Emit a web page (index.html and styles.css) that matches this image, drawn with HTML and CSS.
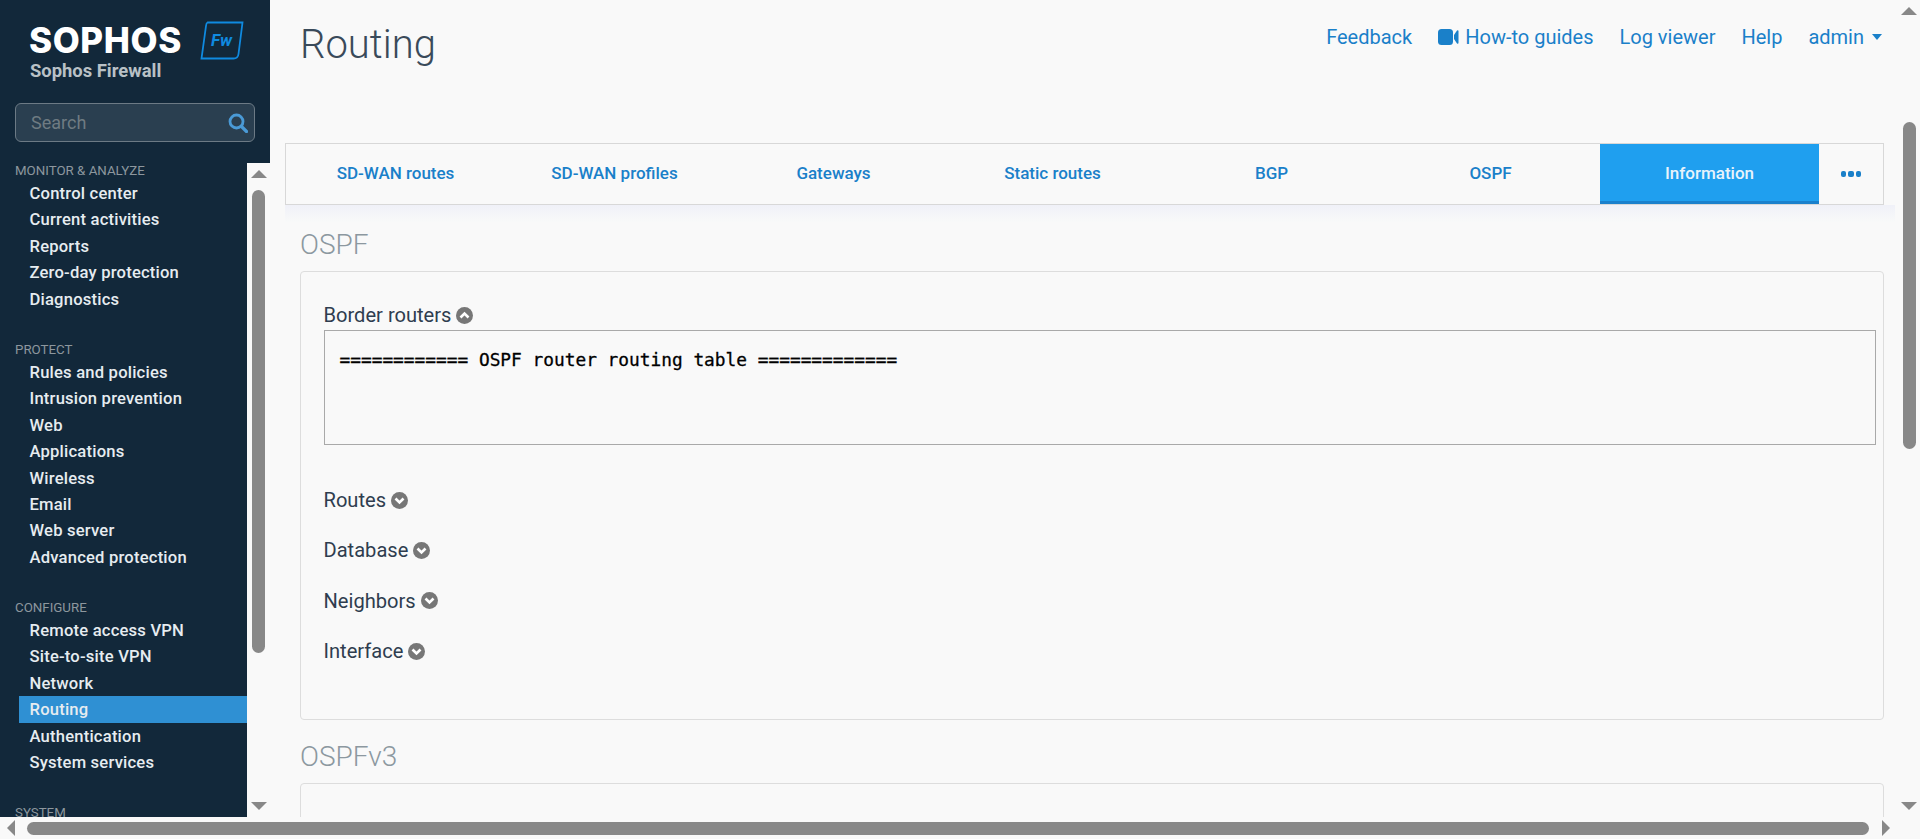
FILE: index.html
```html
<!DOCTYPE html>
<html lang="en">
<head>
<meta charset="utf-8">
<title>Routing</title>
<link rel="stylesheet" href="styles.css">
</head>
<body>
<div class="app">
  <aside class="sidebar">
    <div class="brand">
      <div class="brand-top">
        <span class="wordmark">SOPHOS</span>
        <svg class="fw-badge" width="44" height="40" viewBox="0 0 44 40">
          <path d="M7.500 1.500H42.500L38.500 33Q38 37.500 33.500 37.500H1.500L6 5Q6.300 2 7.500 1.500Z" fill="none" stroke="#0f8ae0" stroke-width="1.800"/>
          <text x="11" y="25" class="fw-text">Fw</text>
        </svg>
      </div>
      <div class="product">Sophos Firewall</div>
      <div class="search">
        <span class="search-text">Search</span>
        <svg width="20" height="20" viewBox="0 0 20 20"><circle cx="8.500" cy="8.500" r="6.500" fill="none" stroke="#4a9ad6" stroke-width="2.800"/><path d="M13.500 13.500L18.500 18.500" stroke="#4a9ad6" stroke-width="3.200" stroke-linecap="round"/></svg>
      </div>
    </div>
    <div class="side-body">
      <nav class="side-nav">
        <div class="nav-group">
          <div class="nav-head">MONITOR &amp; ANALYZE</div>
          <a class="nav-item">Control center</a>
          <a class="nav-item">Current activities</a>
          <a class="nav-item">Reports</a>
          <a class="nav-item">Zero-day protection</a>
          <a class="nav-item">Diagnostics</a>
        </div>
        <div class="nav-group">
          <div class="nav-head">PROTECT</div>
          <a class="nav-item">Rules and policies</a>
          <a class="nav-item">Intrusion prevention</a>
          <a class="nav-item">Web</a>
          <a class="nav-item">Applications</a>
          <a class="nav-item">Wireless</a>
          <a class="nav-item">Email</a>
          <a class="nav-item">Web server</a>
          <a class="nav-item">Advanced protection</a>
        </div>
        <div class="nav-group">
          <div class="nav-head">CONFIGURE</div>
          <a class="nav-item">Remote access VPN</a>
          <a class="nav-item">Site-to-site VPN</a>
          <a class="nav-item">Network</a>
          <a class="nav-item is-active">Routing</a>
          <a class="nav-item">Authentication</a>
          <a class="nav-item">System services</a>
        </div>
        <div class="nav-group">
          <div class="nav-head">SYSTEM</div>
        </div>
      </nav>
      <div class="vscroll vscroll-side">
        <span class="arrow arrow-up"></span>
        <span class="thumb-v thumb-side"></span>
        <span class="arrow arrow-down"></span>
      </div>
    </div>
  </aside>

  <main class="main">
    <header class="topbar">
      <h1 class="title">Routing</h1>
      <div class="links">
        <a class="link">Feedback</a>
        <a class="link link-video">
          <svg width="21" height="16" viewBox="0 0 21 16"><rect x="0" y="0" width="15" height="16" rx="3.500" fill="#1a80c9"/><path d="M16 6L19 1.500Q20.500 .5 20.500 2.500V13.500Q20.500 15.500 19 14.500L16 10Z" fill="#1a80c9"/></svg>
          How-to guides
        </a>
        <a class="link">Log viewer</a>
        <a class="link">Help</a>
        <a class="link link-admin">admin <span class="caret"></span></a>
      </div>
    </header>

    <div class="tabs">
      <a class="tab">SD-WAN routes</a>
      <a class="tab">SD-WAN profiles</a>
      <a class="tab">Gateways</a>
      <a class="tab">Static routes</a>
      <a class="tab">BGP</a>
      <a class="tab">OSPF</a>
      <a class="tab is-active">Information</a>
      <a class="tab-more"><span class="dot"></span><span class="dot"></span><span class="dot"></span></a>
    </div>
    <div class="tabs-glow"></div>

    <section class="section">
      <h2 class="section-title">OSPF</h2>
      <div class="card card-ospf">
        <div class="label-row">Border routers
          <svg class="chev" width="17" height="17" viewBox="0 0 17 17"><circle cx="8.500" cy="8.500" r="8.500" fill="#777"/><path d="M4.500 10.500L8.500 6.500L12.500 10.500" fill="none" stroke="#fff" stroke-width="2.600"/></svg>
        </div>
        <div class="output">============ OSPF router routing table =============</div>
        <div class="rows">
          <div class="label-row tall">Routes
            <svg class="chev" width="17" height="17" viewBox="0 0 17 17"><circle cx="8.500" cy="8.500" r="8.500" fill="#777"/><path d="M4.500 6.500L8.500 10.500L12.500 6.500" fill="none" stroke="#fff" stroke-width="2.600"/></svg>
          </div>
          <div class="label-row tall">Database
            <svg class="chev" width="17" height="17" viewBox="0 0 17 17"><circle cx="8.500" cy="8.500" r="8.500" fill="#777"/><path d="M4.500 6.500L8.500 10.500L12.500 6.500" fill="none" stroke="#fff" stroke-width="2.600"/></svg>
          </div>
          <div class="label-row tall">Neighbors
            <svg class="chev" width="17" height="17" viewBox="0 0 17 17"><circle cx="8.500" cy="8.500" r="8.500" fill="#777"/><path d="M4.500 6.500L8.500 10.500L12.500 6.500" fill="none" stroke="#fff" stroke-width="2.600"/></svg>
          </div>
          <div class="label-row tall">Interface
            <svg class="chev" width="17" height="17" viewBox="0 0 17 17"><circle cx="8.500" cy="8.500" r="8.500" fill="#777"/><path d="M4.500 6.500L8.500 10.500L12.500 6.500" fill="none" stroke="#fff" stroke-width="2.600"/></svg>
          </div>
        </div>
      </div>
    </section>

    <section class="section">
      <h2 class="section-title">OSPFv3</h2>
      <div class="card card-v3"></div>
    </section>
  </main>

  <div class="vscroll vscroll-main">
    <span class="arrow arrow-up"></span>
    <span class="thumb-v thumb-main"></span>
    <span class="arrow arrow-down"></span>
  </div>
</div>
<div class="hscroll">
  <span class="arrow arrow-left"></span>
  <span class="thumb-h"></span>
  <span class="arrow arrow-right"></span>
</div>
</body>
</html>
```
FILE: styles.css
```css
* { box-sizing: border-box; }
html, body { margin: 0; height: 100%; overflow: hidden; }
body { background: #f9f9f9; font-family: Roboto, "Liberation Sans", sans-serif; color: #2f3d4f; }
h1, h2 { margin: 0; font-weight: 300; }
a { color: inherit; text-decoration: none; }

.app { display: flex; height: 817px; }

/* sidebar */
.sidebar { width: 270px; flex: none; background: #12283a; display: flex; flex-direction: column; overflow: hidden; }
.brand { height: 160px; flex: none; padding: 21px 15px 0; }
.brand-top { display: flex; align-items: flex-start; padding-left: 15px; height: 40px; }
.wordmark { font-family: Inter, sans-serif; font-weight: 800; font-size: 35px; line-height: 40px; color: #fff; letter-spacing: 0.600px; width: 169px; margin-top: -1px; margin-left: -1px; }
.fw-badge { flex: none; margin-left: 2px; }
.fw-text { font-family: Roboto, sans-serif; font-weight: 700; font-style: italic; font-size: 17px; fill: #0f8ae0; }
.product { padding-left: 15px; font-weight: 700; font-size: 18.400px; line-height: 20px; color: #b9c1c6; }
.search { margin-top: 22px; height: 39px; width: 240px; border: 1px solid #6c7a85; border-radius: 6px; background: #2a3f50; display: flex; align-items: center; justify-content: space-between; padding: 0 6px 0 15px; }
.search-text { font-size: 18px; color: #6f7b82; }

.side-body { flex: 1; display: flex; min-height: 0; }
.side-nav { width: 247px; flex: none; overflow: hidden; padding-left: 15px; }
.nav-group { margin-bottom: 27px; }
.nav-head { font-size: 13.300px; line-height: 21px; color: #8d979e; font-weight: 400; margin-bottom: -1px; }
.nav-item { display: block; height: 26.400px; line-height: 27.500px; padding-left: 14.500px; font-size: 16.600px; font-weight: 500; letter-spacing: 0.200px; color: #e6ecf0; white-space: nowrap; }
.nav-item.is-active { background: #2f90d3; margin-left: 4px; padding-left: 10.500px; }

/* scrollbars */
.vscroll { width: 23px; flex: none; background: #f9f9f9; display: flex; flex-direction: column; align-items: center; }
.vscroll-side { margin-top: 3px; padding: 7px 0 7px; }
.vscroll-main { width: 22px; padding: 7px 0; }
.arrow { display: block; width: 0; height: 0; flex: none; border-style: solid; border-color: transparent; }
.arrow-up { border-width: 0 8px 8px; border-bottom-color: #888; }
.arrow-down { border-width: 8px 8px 0; border-top-color: #888; }
.arrow-left { border-width: 8px 8px 8px 0; border-right-color: #888; }
.arrow-right { border-width: 8px 0 8px 8px; border-left-color: #888; }
.thumb-v { display: block; width: 13px; background: #888; border-radius: 7px; }
.thumb-side { height: 463px; margin-top: 12px; margin-bottom: auto; }
.thumb-main { height: 327px; margin-top: 107px; margin-bottom: auto; }
.hscroll { height: 22px; display: flex; align-items: center; padding-left: 7px; background: #f9f9f9; }
.thumb-h { display: block; width: 1842px; height: 13px; background: #888; border-radius: 7px; margin: 0 13px 0 12px; }

/* main */
.main { flex: 1; min-width: 0; height: 817px; overflow: hidden; padding: 0 0 0 15px; }
.topbar { height: 143px; display: flex; justify-content: space-between; align-items: flex-start; padding: 0 16px 0 15px; }
.title { font-size: 40px; line-height: 46px; margin-top: 22px; color: #3a4a5a; }
.links { display: flex; gap: 26px; align-items: center; margin-top: 26px; height: 22px; }
.link { font-size: 20px; line-height: 22px; color: #1a80c9; display: flex; align-items: center; gap: 6px; }
.link-video svg { flex: none; }
.caret { display: inline-block; width: 0; height: 0; margin-left: 2px; border-style: solid; border-color: #1a80c9 transparent transparent; border-width: 6px 5.500px 0; }

.tabs { display: flex; width: 1599px; height: 62px; border: 1px solid #d8d8d8; }
.tab { width: 219px; flex: none; display: flex; align-items: center; justify-content: center; padding-bottom: 2px; font-size: 17px; font-weight: 500; color: #1a80c9; }
.tab.is-active { background: #1f9fef; color: #e8f3fb; padding-bottom: 0; border-bottom: 3px solid #1a80cc; }
.tab-more { flex: 1; display: flex; align-items: center; justify-content: center; gap: 2px; }
.dot { width: 5.500px; height: 5.500px; border-radius: 2px; background: #1a80c9; }
.tabs-glow { height: 17px; width: 1610px; background: linear-gradient(#f0f1f8, #f8f9f9); }

.section { padding: 0 0 0 15px; margin-bottom: 22px; margin-right: 14px; }
.tabs-glow + .section { margin-top: 8px; }
.section-title { font-size: 28px; line-height: 30px; color: #8c98a0; }
.card { margin-top: 11px; border: 1px solid #ddd; border-radius: 4px; padding: 0 7px 0 18px; }
.card-ospf { height: 449px; padding-top: 31px; padding-left: 22.500px; }
.card-v3 { height: 100px; }
.label-row { display: flex; align-items: center; gap: 5px; height: 24px; font-size: 20.100px; color: #2f3d4f; }
.label-row.tall { height: 50.300px; }
.chev { flex: none; }
.output { margin-top: 3px; height: 115px; border: 1px solid #a9a9a9; padding: 19px 15px 0; font-family: "DejaVu Sans Mono", monospace; font-size: 17.820px; line-height: 20px; color: #000; white-space: pre; -webkit-text-stroke: 0.3px #000; }
.rows { margin-top: 30px; }
```
